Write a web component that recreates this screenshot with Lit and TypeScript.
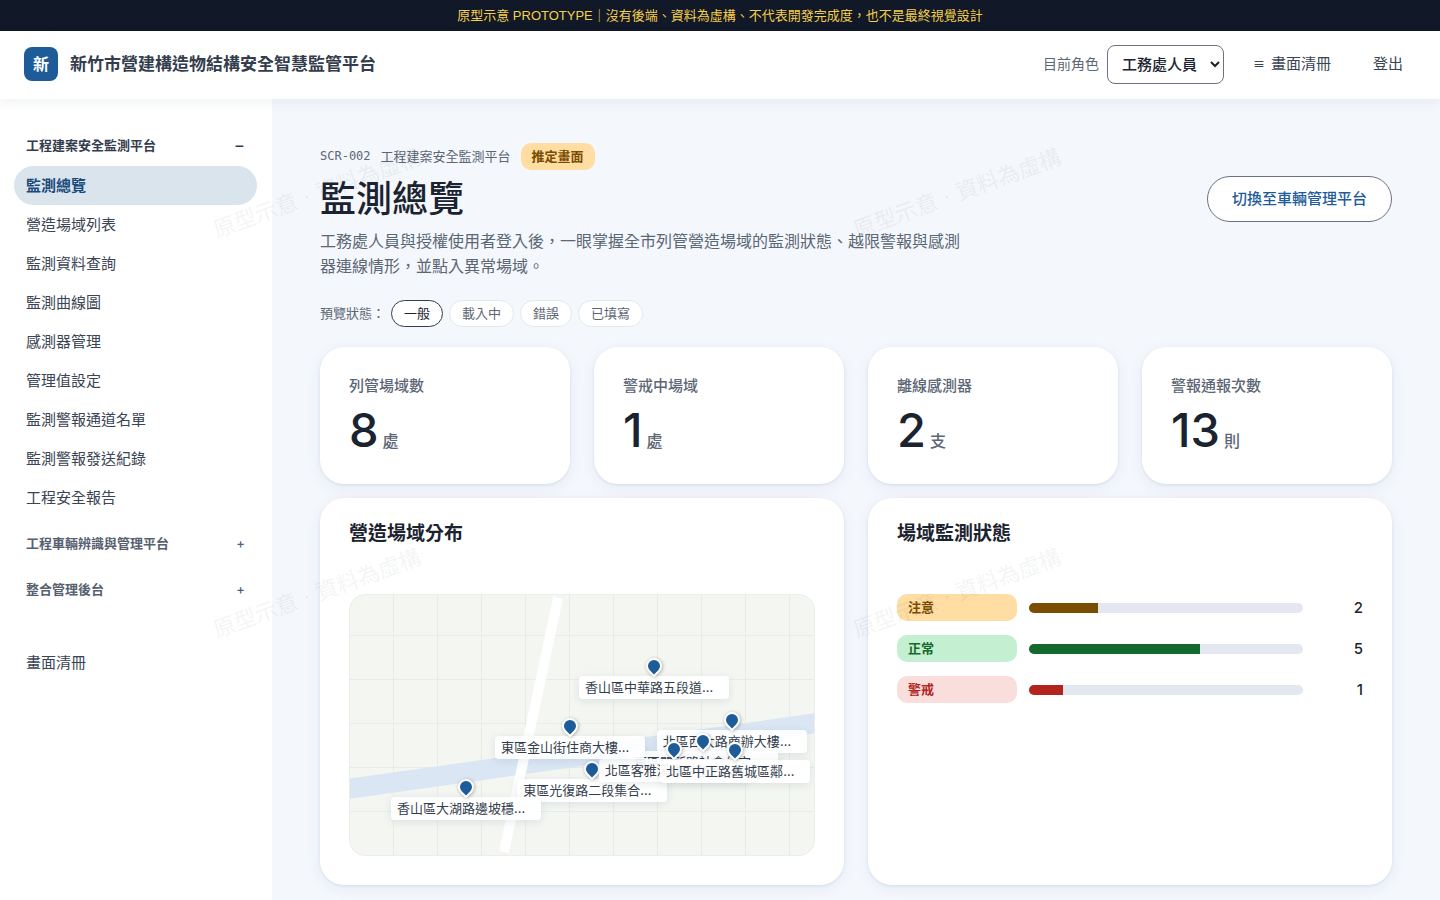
import { LitElement, html, css } from "lit";
import { customElement, state } from "lit/decorators.js";
import { classMap } from "lit/directives/class-map.js";

const NAV = [
  "監測總覽",
  "營造場域列表",
  "監測資料查詢",
  "監測曲線圖",
  "感測器管理",
  "管理值設定",
  "監測警報通道名單",
  "監測警報發送紀錄",
  "工程安全報告",
];

const STATS = [
  { label: "列管場域數", value: 8, unit: "處" },
  { label: "警戒中場域", value: 1, unit: "處" },
  { label: "離線感測器", value: 2, unit: "支" },
  { label: "警報通報次數", value: 13, unit: "則" },
];

const SITES = [
  { name: "東區光復路二段集合住宅新建工程", x: 52.2, y: 66.9 },
  { name: "北區西大路商辦大樓新建工程", x: 82.3, y: 48.1 },
  { name: "東區關新路社會住宅新建工程", x: 76.1, y: 56.2 },
  { name: "香山區中華路五段道路拓寬工程", x: 65.5, y: 27.3 },
  { name: "北區客雅溪護岸整治工程", x: 69.8, y: 59.2 },
  { name: "東區金山街住商大樓新建工程", x: 47.4, y: 50.4 },
  { name: "北區中正路舊城區鄰房保護工程", x: 83, y: 59.6 },
  { name: "香山區大湖路邊坡穩定工程", x: 25, y: 73.8 },
];

const LEVELS = [
  { label: "注意", tone: "warn", count: 2 },
  { label: "正常", tone: "ok", count: 5 },
  { label: "警戒", tone: "alert", count: 1 },
];

const STATES = ["一般", "載入中", "錯誤", "已填寫"];

@customElement("app-root")
export class AppRoot extends LitElement {
  @state() private preview = "一般";

  static styles = css`
    :host {
      display: flex;
      flex-direction: column;
      min-height: 100vh;
      color: #1b2330;
      background: #f4f7fc;
      font-family: Inter, "Noto Sans CJK TC", sans-serif;
      font-size: 15px;
      line-height: 24px;
    }
    * {
      box-sizing: border-box;
    }
    h1, h2, p, ul {
      margin: 0;
      padding: 0;
    }
    ul {
      list-style: none;
    }
    a {
      color: inherit;
      text-decoration: none;
    }
    button, select {
      font: inherit;
      color: inherit;
    }
    .notice {
      padding: 6px 16px 5px;
      background: #111827;
      color: #f5cf4a;
      font-family: "Liberation Sans", "Noto Sans CJK TC", sans-serif;
      font-size: 13px;
      line-height: 20px;
      text-align: center;
    }
    .topbar {
      position: relative;
      z-index: 1;
      display: flex;
      align-items: center;
      gap: 12px;
      height: 68px;
      padding: 0 24px 2px;
      background: #fff;
      box-shadow: 0 2px 12px rgba(30, 60, 100, 0.08);
    }
    .logo {
      display: grid;
      place-items: center;
      width: 34px;
      height: 34px;
      border-radius: 8px;
      background: #1d5c99;
      color: #fff;
      font-weight: 600;
      font-size: 16px;
    }
    .brand {
      flex: 1;
      color: #333d4d;
      font-size: 17px;
      font-weight: 600;
    }
    .role {
      display: flex;
      align-items: center;
      gap: 8px;
      color: #5c6675;
      font-size: 14px;
    }
    .role select {
      height: 39px;
      padding: 0 4px 0 10px;
      border: 1px solid #6b7280;
      border-radius: 8px;
      background: #fff;
      color: #1b2330;
      font-size: 15px;
      font-weight: 500;
      width: 117px;
    }
    .link {
      display: flex;
      align-items: center;
      gap: 6px;
      padding: 0 13px 0 17px;
      color: #3a4453;
    }
    .burger {
      padding-top: 2px;
      font-size: 12px;
      font-weight: 500;
    }
    .body {
      flex: 1;
      display: grid;
      grid-template-columns: 272px minmax(0, 1fr);
    }
    .side {
      padding: 33px 15px 24px 14px;
      background: #fff;
    }
    .group {
      display: flex;
      justify-content: space-between;
      align-items: center;
      width: 100%;
      padding: 0 12px;
      height: 26px;
      border: 0;
      background: none;
      color: #56606f;
      font-size: 13px;
      font-weight: 600;
      text-align: left;
    }
    .group.open {
      color: #333d4d;
    }
    .group.closed {
      margin-top: 20px;
    }
    .sign {
      font-weight: 500;
    }
    .minus {
      font-size: 17px;
      font-weight: 400;
    }
    .items {
      margin: 8px 0 -7px;
    }
    .item {
      display: block;
      padding: 8px 12px 7px;
      border-radius: 20px;
      color: #3a4453;
    }
    .item.current {
      background: #dae4ed;
      color: #1a4b7c;
      font-weight: 600;
    }
    .extra {
      margin-top: 41px;
    }
    .main {
      padding: 44px 48px 48px;
    }
    .head {
      display: flex;
      justify-content: space-between;
      align-items: flex-start;
      gap: 24px;
    }
    .intro {
      max-width: 640px;
    }
    .crumb {
      display: flex;
      align-items: center;
      gap: 10px;
      color: #5c6675;
      font-size: 13px;
      line-height: 27px;
    }
    .code {
      font-family: "DejaVu Sans Mono", "Liberation Mono", monospace;
      font-size: 12px;
    }
    .tag {
      padding: 0 11px;
      border-radius: 10px;
      font-weight: 600;
      font-size: 13px;
      line-height: 27px;
    }
    .warn {
      background: #ffdda3;
      color: #7a4d00;
    }
    .ok {
      background: #c4efd1;
      color: #14692e;
    }
    .alert {
      background: #f9dedc;
      color: #b3241c;
    }
    h1 {
      margin-top: 6px;
      font-size: 36px;
      line-height: 46px;
      font-weight: 500;
    }
    .lead {
      margin-top: 7px;
      color: #5c6675;
      font-size: 16px;
      line-height: 25px;
    }
    .switch {
      height: 46px;
      margin-top: 33px;
      padding: 0 24px;
      border: 1px solid #6b7280;
      border-radius: 23px;
      background: #fff;
      color: #1d5c99;
      font-weight: 500;
    }
    .preview {
      display: flex;
      align-items: center;
      gap: 6px;
      margin: 21px 0 20px;
      color: #5c6675;
      font-size: 13px;
    }
    .hint {
      padding-bottom: 2px;
    }
    .chip {
      height: 27px;
      padding: 0 12px 2px;
      border: 1px solid #e3e8f0;
      border-radius: 14px;
      background: #fff;
      color: #5c6675;
      line-height: 20px;
    }
    .chip.on {
      border-color: #333d4d;
      color: #1b2330;
    }
    .stats {
      display: grid;
      grid-template-columns: repeat(4, minmax(0, 1fr));
      gap: 24px;
    }
    .panels {
      display: grid;
      grid-template-columns: repeat(2, minmax(0, 1fr));
      gap: 24px;
      margin-top: 14px;
    }
    .card {
      border-radius: 24px;
      background: #fff;
      box-shadow: 0 1px 3px rgba(30, 80, 140, 0.12), 0 4px 16px rgba(30, 80, 140, 0.06);
    }
    .stat {
      padding: 27px 29px 30px;
      color: #5c6675;
      font-weight: 500;
    }
    .figure {
      display: flex;
      align-items: baseline;
      gap: 4px;
      margin-top: 8px;
      font-size: 16px;
      line-height: 24px;
    }
    .value {
      color: #1b2330;
      font-size: 47px;
      line-height: 48px;
    }
    .panel {
      padding: 23px 29px 29px;
    }
    h2 {
      margin-bottom: 47px;
      font-size: 19px;
      line-height: 26px;
      font-weight: 600;
    }
    .map {
      position: relative;
      height: 262px;
      overflow: hidden;
      border: 1px solid #eceeeb;
      border-radius: 16px;
      background:
        repeating-linear-gradient(0deg, transparent 0 43px, #e8ebe8 43px 44px),
        repeating-linear-gradient(90deg, transparent 0 43px, #e8ebe8 43px 44px),
        #f3f6f1;
    }
    .river {
      position: absolute;
      left: -10%;
      right: -10%;
      top: 58%;
      height: 20px;
      background: #dae6f3;
      transform: rotate(-8deg);
    }
    .road {
      position: absolute;
      top: 0;
      bottom: 0;
      left: 38%;
      width: 10px;
      background: #fff;
      transform: rotate(12deg);
    }
    .site {
      position: absolute;
      display: flex;
      flex-direction: column;
      align-items: center;
      gap: 2px;
      margin-top: -8px;
      transform: translateX(-50%);
    }
    .pin {
      width: 16px;
      height: 16px;
      border: 2px solid #fff;
      border-radius: 50% 50% 50% 0;
      background: #1d5c99;
      box-shadow: 0 1px 4px rgba(0, 0, 0, 0.3);
      transform: rotate(-45deg);
    }
    .name {
      width: 150px;
      padding: 0 6px;
      overflow: hidden;
      border-radius: 4px;
      background: rgba(255, 255, 255, 0.92);
      box-shadow: 0 2px 8px rgba(30, 60, 100, 0.1);
      color: #333d4d;
      font-size: 13px;
      line-height: 23px;
      text-overflow: ellipsis;
      white-space: nowrap;
    }
    .levels {
      display: grid;
      gap: 14px;
    }
    .level {
      display: grid;
      grid-template-columns: 120px 1fr 48px;
      align-items: center;
      gap: 12px;
    }
    .track {
      height: 10px;
      overflow: hidden;
      border-radius: 5px;
      background: #e3e8f0;
    }
    .fill {
      height: 100%;
      background: currentColor;
    }
    .fill-warn {
      color: #7a4d00;
    }
    .fill-ok {
      color: #14692e;
    }
    .fill-alert {
      color: #b3241c;
    }
    .count {
      font-size: 15px;
      font-weight: 500;
      text-align: right;
    }
    .watermark {
      position: fixed;
      inset: 0;
      z-index: 2;
      width: 100%;
      height: 100%;
      pointer-events: none;
    }
    .mark {
      fill: #1b2330;
      fill-opacity: 0.05;
      font-family: "DejaVu Sans", "Noto Sans CJK TC", sans-serif;
      font-size: 22px;
    }
  `;

  private renderSide() {
    return html`<nav class="side" aria-label="主選單">
      <button class="group open" aria-expanded="true"><span>工程建案安全監測平台</span><span class="minus">−</span></button>
      <ul class="items">
        ${NAV.map((n, i) => html`<li><a href="#" class=${classMap({ item: true, current: i === 0 })}>${n}</a></li>`)}
      </ul>
      <button class="group closed" aria-expanded="false"><span>工程車輛辨識與管理平台</span><span class="sign">+</span></button>
      <button class="group closed" aria-expanded="false"><span>整合管理後台</span><span class="sign">+</span></button>
      <a href="#" class="item extra">畫面清冊</a>
    </nav>`;
  }

  private renderMap() {
    return html`<section class="card panel">
      <h2>營造場域分布</h2>
      <div class="map">
        <div class="river"></div>
        <div class="road"></div>
        ${SITES.map(
          (s) => html`<div class="site" style="left:${s.x}%;top:${s.y}%">
            <span class="pin"></span><span class="name">${s.name}</span>
          </div>`
        )}
      </div>
    </section>`;
  }

  private renderLevels() {
    const total = LEVELS.reduce((sum, l) => sum + l.count, 0);
    return html`<section class="card panel">
      <h2>場域監測狀態</h2>
      <div class="levels">
        ${LEVELS.map(
          (l) => html`<div class="level">
            <span class="tag ${l.tone}">${l.label}</span>
            <div class="track"><div class="fill fill-${l.tone}" style="width:${(l.count / total) * 100}%"></div></div>
            <span class="count">${l.count}</span>
          </div>`
        )}
      </div>
    </section>`;
  }

  render() {
    return html`
      <div class="notice">原型示意 PROTOTYPE｜沒有後端、資料為虛構、不代表開發完成度，也不是最終視覺設計</div>
      <header class="topbar">
        <span class="logo">新</span>
        <span class="brand">新竹市營建構造物結構安全智慧監管平台</span>
        <div class="role">
          <label for="role">目前角色</label>
          <select id="role"><option>工務處人員</option></select>
        </div>
        <a href="#" class="link"><span class="burger">≡</span>畫面清冊</a>
        <a href="#" class="link">登出</a>
      </header>
      <div class="body">
        ${this.renderSide()}
        <main class="main">
          <div class="head">
            <div class="intro">
              <div class="crumb">
                <span class="code">SCR-002</span><span>工程建案安全監測平台</span><span class="tag warn">推定畫面</span>
              </div>
              <h1>監測總覽</h1>
              <p class="lead">工務處人員與授權使用者登入後，一眼掌握全市列管營造場域的監測狀態、越限警報與感測器連線情形，並點入異常場域。</p>
            </div>
            <button class="switch">切換至車輛管理平台</button>
          </div>
          <div class="preview">
            <span class="hint">預覽狀態：</span>
            ${STATES.map(
              (s) => html`<button
                class=${classMap({ chip: true, on: s === this.preview })}
                aria-pressed=${s === this.preview}
                @click=${() => (this.preview = s)}
              >${s}</button>`
            )}
          </div>
          <div class="stats">
            ${STATS.map(
              (s) => html`<div class="card stat">
                <div>${s.label}</div>
                <div class="figure"><span class="value">${s.value}</span><span>${s.unit}</span></div>
              </div>`
            )}
          </div>
          <div class="panels">${this.renderMap()}${this.renderLevels()}</div>
        </main>
      </div>
      <svg class="watermark" aria-hidden="true">
        <defs>
          <pattern id="mark" width="640" height="400" patternUnits="userSpaceOnUse">
            <text class="mark" x="217" y="238" transform="rotate(-20 217 238)">原型示意 · 資料為虛構</text>
          </pattern>
        </defs>
        <rect width="100%" height="100%" fill="url(#mark)"></rect>
      </svg>
    `;
  }
}
